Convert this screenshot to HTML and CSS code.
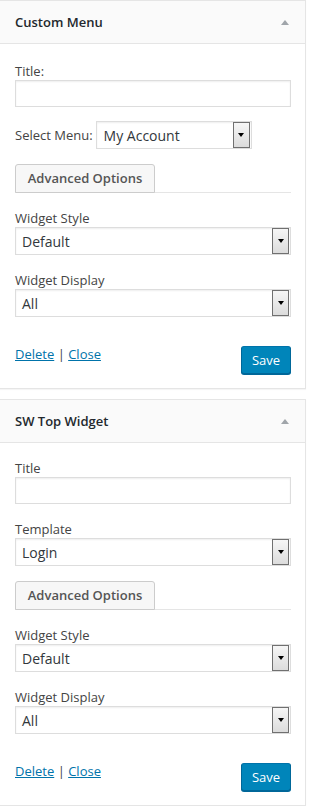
FILE: index.html
```html
<!DOCTYPE html>
<html>
<head>
<meta charset="utf-8">
<link rel="stylesheet" href="styles.css">
</head>
<body>
<div class="widget">
  <div class="widget-top">
    <h3 class="widget-title">Custom Menu</h3>
    <span class="toggle"></span>
  </div>
  <div class="widget-inside first">
    <div class="label">Title:</div>
    <div class="input"></div>
    <div class="row">
      <span class="row-label">Select Menu:</span>
      <div class="select short"><span class="value">My Account</span><span class="arrow"></span></div>
    </div>
    <div class="tabs"><span class="tab">Advanced Options</span></div>
    <div class="label gap">Widget Style</div>
    <div class="select"><span class="value">Default</span><span class="arrow"></span></div>
    <div class="label gap">Widget Display</div>
    <div class="select"><span class="value">All</span><span class="arrow"></span></div>
    <div class="actions">
      <div class="links"><a href="#">Delete</a> | <a href="#">Close</a></div>
      <button class="save">Save</button>
    </div>
  </div>
</div>
<div class="widget second-widget">
  <div class="widget-top">
    <h3 class="widget-title">SW Top Widget</h3>
    <span class="toggle"></span>
  </div>
  <div class="widget-inside">
    <div class="label">Title</div>
    <div class="input"></div>
    <div class="label gap">Template</div>
    <div class="select"><span class="value">Login</span><span class="arrow"></span></div>
    <div class="tabs"><span class="tab">Advanced Options</span></div>
    <div class="label gap">Widget Style</div>
    <div class="select"><span class="value">Default</span><span class="arrow"></span></div>
    <div class="label gap">Widget Display</div>
    <div class="select"><span class="value">All</span><span class="arrow"></span></div>
    <div class="actions">
      <div class="links"><a href="#">Delete</a> | <a href="#">Close</a></div>
      <button class="save">Save</button>
    </div>
  </div>
</div>
</body>
</html>
```
FILE: styles.css
```css
*, *::before, *::after {
  box-sizing: border-box;
}
html, body {
  margin: 0;
  padding: 0;
  background: #fff;
}
body {
  font-family: "Open Sans", "Liberation Sans", sans-serif;
  font-size: 13px;
  color: #444;
}
.widget {
  width: 306px;
  border: 1px solid #e5e5e5;
  border-left: none;
  background: #fff;
  box-shadow: 0 1px 1px rgba(0,0,0,0.04);
}
.second-widget {
  margin-top: 10px;
}
.widget-top {
  height: 43px;
  background: #fafafa;
  border-bottom: 1px solid #e5e5e5;
  display: flex;
  align-items: center;
  justify-content: space-between;
  padding: 0 16px 0 15px;
}
.widget-title {
  margin: 0;
  font-size: 13px;
  font-weight: 600;
  color: #23282d;
}
.toggle {
  width: 0;
  height: 0;
  border-left: 4px solid transparent;
  border-right: 4px solid transparent;
  border-bottom: 5px solid #a0a5aa;
}
.widget-inside {
  padding: 16px 14px 14px 15px;
}
.widget-inside.first {
  padding-top: 18px;
}
.label {
  line-height: 18px;
  height: 18px;
}
.label.gap {
  margin-top: 16px;
}
.input {
  height: 27px;
  border: 1px solid #ddd;
  box-shadow: inset 0 1px 2px rgba(0,0,0,0.07);
  background: #fff;
}
.row {
  margin-top: 14px;
  display: flex;
  align-items: center;
  gap: 3px;
}
.select {
  height: 28px;
  border: 1px solid #ddd;
  box-shadow: inset 0 1px 2px rgba(0,0,0,0.07);
  background: #fff;
  display: flex;
  align-items: center;
  justify-content: space-between;
  padding-left: 6px;
}
.select.short {
  width: 156px;
  padding-left: 7px;
}
.value {
  font-size: 14px;
  color: #32373c;
}
.arrow {
  width: 17px;
  height: 26px;
  margin-right: 1px;
  border: 1px solid #707070;
  background: linear-gradient(#f6f6f6, #dcdcdc);
  display: flex;
  align-items: center;
  justify-content: center;
}
.arrow::after {
  content: "";
  width: 0;
  height: 0;
  border-left: 3.5px solid transparent;
  border-right: 3.5px solid transparent;
  border-top: 4px solid #000;
}
.tabs {
  margin-top: 15px;
  border-bottom: 1px solid #e5e5e5;
  display: flex;
}
.tab {
  display: block;
  width: 140px;
  height: 29px;
  line-height: 27px;
  text-align: center;
  border: 1px solid #ccc;
  border-radius: 3px 3px 0 0;
  background: #f7f7f7;
  font-weight: 600;
  color: #555;
  margin-bottom: -1px;
}
.tabs + .label.gap {
  margin-top: 16px;
}
.actions {
  margin-top: 29px;
  display: flex;
  justify-content: space-between;
  align-items: flex-start;
}
.links {
  line-height: 18px;
  margin-top: -1px;
}
.links a {
  color: #0073aa;
  text-decoration: underline;
}
.save {
  width: 50px;
  height: 28px;
  padding: 0;
  background: #0085ba;
  border: 1px solid #0073aa;
  border-color: #0073aa #006799 #006799;
  border-radius: 3px;
  box-shadow: 0 1px 0 #006799;
  color: #fff;
  font-family: "Open Sans", "Liberation Sans", sans-serif;
  font-size: 13px;
  line-height: 26px;
}
```
